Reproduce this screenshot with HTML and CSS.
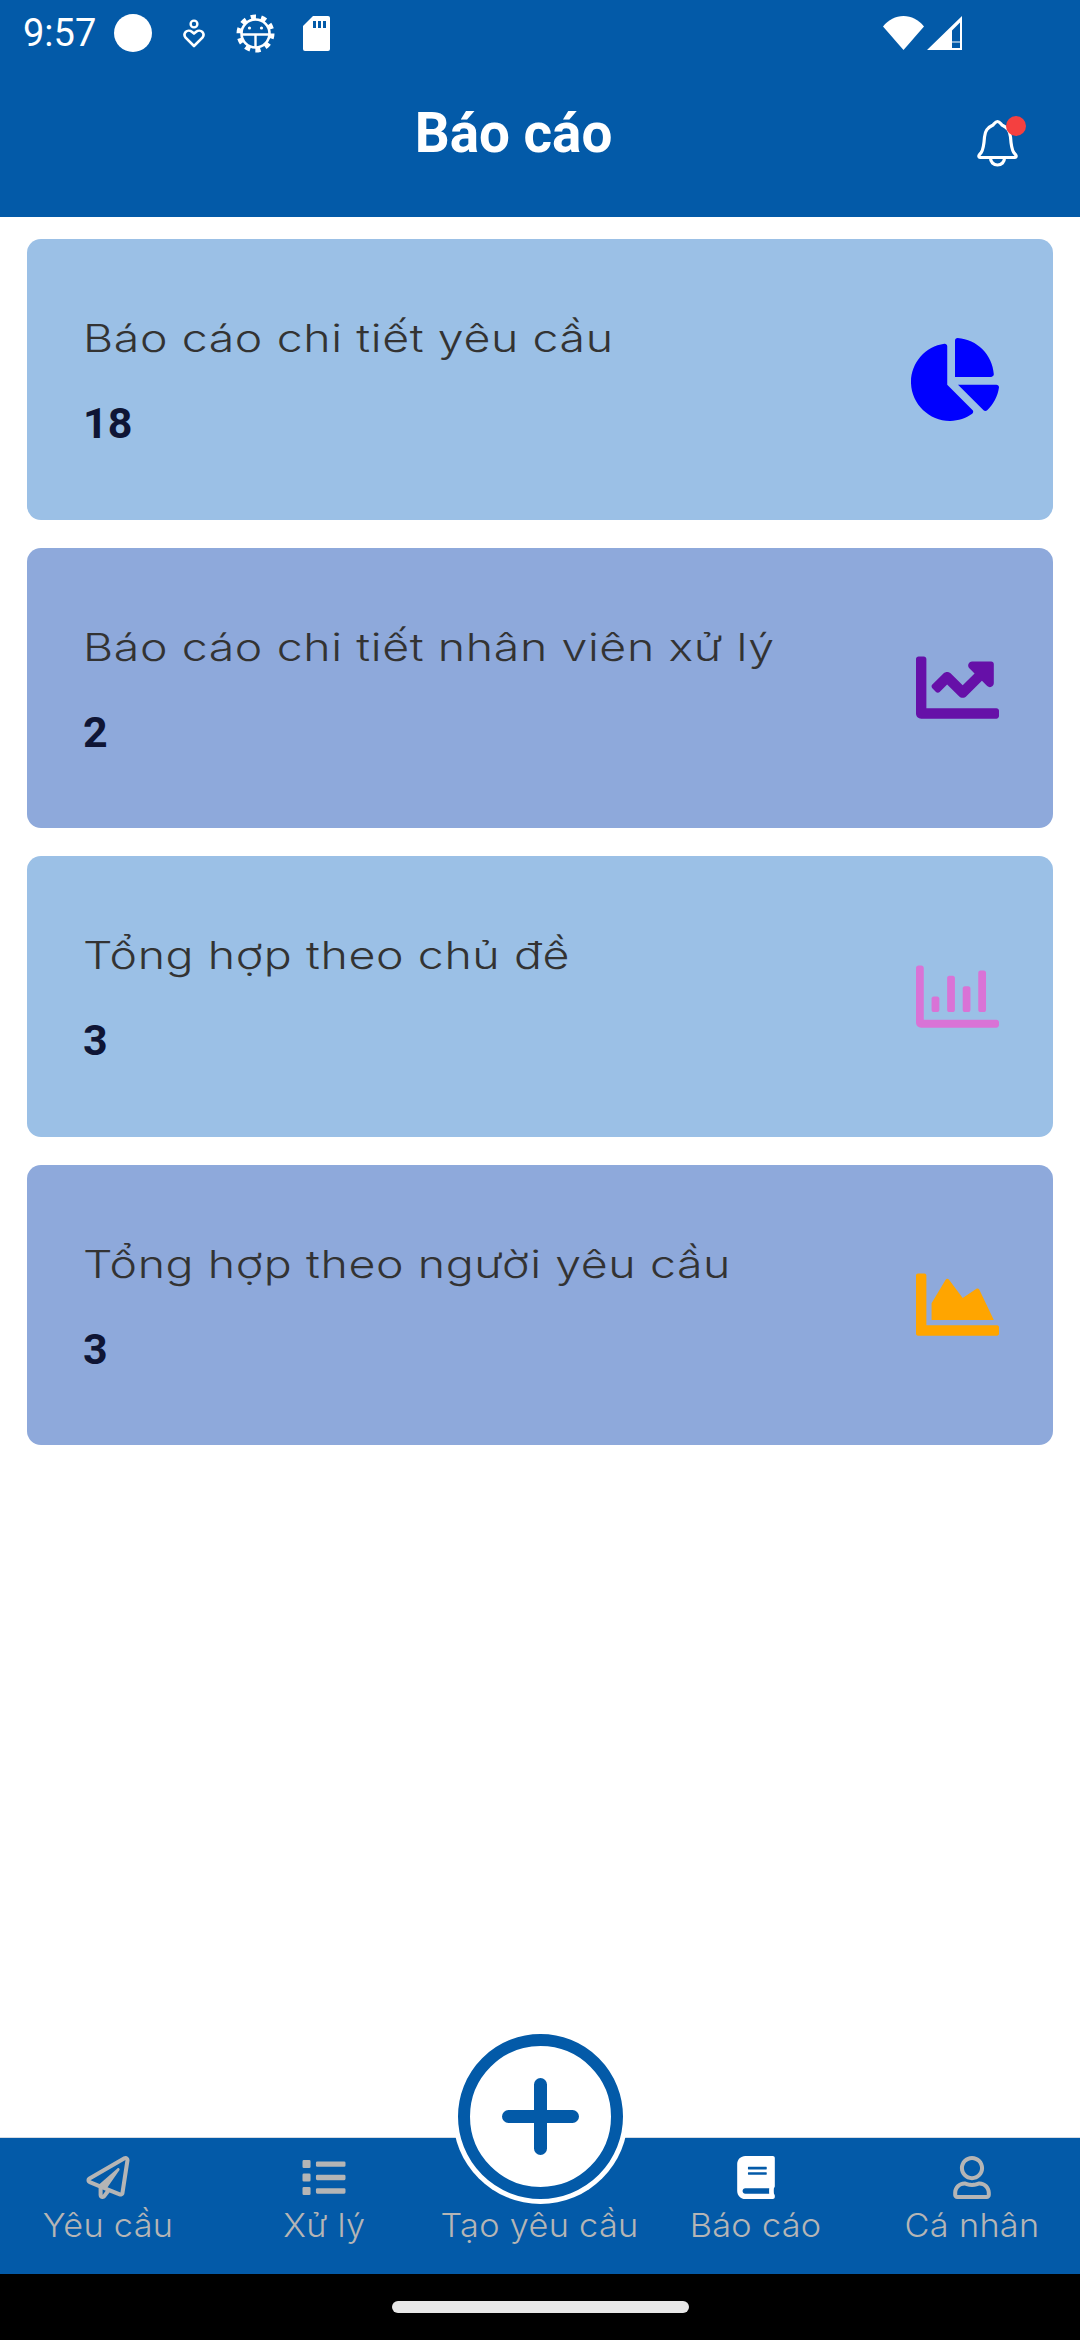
FILE: index.html
```html
<!DOCTYPE html>
<html lang="vi">
<head>
<meta charset="utf-8">
<title>Báo cáo</title>
<link rel="stylesheet" href="styles.css">
</head>
<body>
<div class="screen">
  <header class="header">
    <div class="status">
      <span class="time">9:57</span>
      <span class="dot-icon"></span>
      <svg class="st-heart" viewBox="0 0 22 29"><circle cx="11" cy="5" r="3.4" fill="none" stroke="#fff" stroke-width="2.4"/><path d="M11 27 2.6 18.6a4.4 4.4 0 0 1 0-5.6 4.6 4.6 0 0 1 6.2-.2L11 14.6l2.2-1.8a4.6 4.6 0 0 1 6.2.2 4.4 4.4 0 0 1 0 5.6z" fill="none" stroke="#fff" stroke-width="2.6" stroke-linejoin="round"/></svg>
      <svg class="st-gear" viewBox="0 0 39 39"><circle cx="19.5" cy="19.5" r="16.5" fill="none" stroke="#fff" stroke-width="5" stroke-dasharray="5.2 5.16"/><circle cx="19.5" cy="19.5" r="14" fill="none" stroke="#fff" stroke-width="2.6"/><path d="M5.5 20.5h28M19.5 20.5v13" stroke="#fff" stroke-width="2.4" fill="none"/><circle cx="13.5" cy="14" r="1.6" fill="#fff"/><circle cx="25.5" cy="14" r="1.6" fill="#fff"/></svg>
      <svg class="st-sd" viewBox="0 0 27 35"><path d="M10 0h15a2 2 0 0 1 2 2v31a2 2 0 0 1-2 2H2a2 2 0 0 1-2-2V10z" fill="#fff"/><path d="M10 5h3v7h-3zM15 5h3v7h-3zM20 5h3v7h-3z" fill="#035aa8"/></svg>
      <span class="status-gap"></span>
      <svg class="st-wifi" viewBox="0 0 41 34"><path d="M0 10.500C5.500 3.800 12.600 0 20.500 0S35.500 3.800 41 10.500L20.500 34z" fill="#fff"/></svg>
      <svg class="st-signal" viewBox="0 0 35 34"><path d="M35 0v34H0zM33 6.500 25 14.500V32h8z" fill="#fff" fill-rule="evenodd"/><path d="M25 25h8v2h-8z" fill="#fff" opacity=".5"/></svg>
    </div>
    <div class="appbar">
      <h1 class="title">Báo cáo</h1>
      <div class="bell">
        <svg class="bell-svg" viewBox="0 0 41 48"><path d="M20.500 2.500c2 0 3 2 4.500 3.500 5.500 2.500 8 5.500 8.500 12 .4 6 .8 12 3.300 15.500l2 2.500c.8 1.300.2 2.500-1.300 2.500H3.500c-1.500 0-2.100-1.200-1.300-2.500l2-2.500C6.700 30 7.100 24 7.500 18c.5-6.500 3-9.500 8.500-12 1.500-1.500 2.500-3.500 4.500-3.500zM13.500 39c0 4 3 7 7 7s7-3 7-7" fill="none" stroke="#fff" stroke-width="3.200" stroke-linejoin="round"/></svg>
        <span class="bell-dot"></span>
      </div>
    </div>
  </header>

  <main class="list">
    <section class="card card-light">
      <div class="card-text"><p class="card-title">Báo cáo chi tiết yêu cầu</p><p class="card-num">18</p></div>
      <svg class="ic-pie" viewBox="0 0 544 512"><path fill="#0000ff" d="M527.79 288H290.500l158.030 158.030c6.040 6.040 15.980 6.530 22.190.68 38.700-36.460 65.320-85.610 73.130-140.860 1.340-9.460-6.510-17.850-16.060-17.850zm-15.830-64.800C503.720 103.740 408.260 8.280 288.800.04 279.680-.59 272 7.100 272 16.240V240h223.770c9.140 0 16.820-7.680 16.190-16.800zM224 288V50.710c0-9.550-8.390-17.400-17.840-16.060C86.990 51.490-4.100 155.600.14 280.370 4.500 408.510 114.830 513.590 243.030 511.980c50.400-.63 96.970-16.870 135.260-44.030 7.900-5.600 8.420-17.230 1.570-24.080L224 288z"/></svg>
    </section>
    <section class="card card-dark">
      <div class="card-text"><p class="card-title">Báo cáo chi tiết nhân viên xử lý</p><p class="card-num">2</p></div>
      <svg class="ic-chart" viewBox="0 0 512 512"><path fill="#6610a8" d="M496 384H64V80c0-8.840-7.160-16-16-16H16C7.160 64 0 71.160 0 80v336c0 17.670 14.330 32 32 32h464c8.840 0 16-7.160 16-16v-32c0-8.840-7.160-16-16-16zM464 96H345.940c-21.380 0-32.090 25.850-16.970 40.970l32.400 32.400L288 242.750l-73.370-73.370c-12.500-12.500-32.760-12.500-45.250 0l-68.690 68.690c-6.250 6.250-6.250 16.380 0 22.630l22.620 22.620c6.250 6.250 16.380 6.250 22.630 0L192 237.250l73.370 73.370c12.500 12.500 32.760 12.500 45.250 0l96-96 32.400 32.400c15.120 15.120 40.970 4.410 40.970-16.970V112c0-8.840-7.160-16-16-16z"/></svg>
    </section>
    <section class="card card-light">
      <div class="card-text"><p class="card-title">Tổng hợp theo chủ đề</p><p class="card-num">3</p></div>
      <svg class="ic-chart" viewBox="0 0 512 512"><path fill="#d973d6" d="M396.800 352h22.400c6.400 0 12.800-6.400 12.800-12.800V108.800c0-6.400-6.400-12.800-12.800-12.800h-22.400c-6.400 0-12.800 6.400-12.800 12.800v230.400c0 6.400 6.400 12.800 12.800 12.800zm-192 0h22.400c6.400 0 12.800-6.400 12.800-12.800V140.800c0-6.400-6.400-12.800-12.800-12.800h-22.400c-6.400 0-12.800 6.400-12.800 12.800v198.400c0 6.400 6.400 12.800 12.800 12.800zm96 0h22.400c6.400 0 12.800-6.400 12.800-12.800V204.800c0-6.400-6.400-12.800-12.800-12.800h-22.400c-6.400 0-12.800 6.400-12.800 12.800v134.400c0 6.400 6.400 12.800 12.800 12.800zM496 400H48V80c0-8.840-7.160-16-16-16H16C7.160 64 0 71.160 0 80v336c0 17.670 14.330 32 32 32h464c8.840 0 16-7.160 16-16v-16c0-8.840-7.160-16-16-16zm-387.200-48h22.400c6.400 0 12.800-6.400 12.800-12.800v-70.400c0-6.400-6.400-12.800-12.800-12.800h-22.400c-6.400 0-12.800 6.400-12.800 12.800v70.400c0 6.400 6.400 12.800 12.800 12.800z"/></svg>
    </section>
    <section class="card card-dark">
      <div class="card-text"><p class="card-title">Tổng hợp theo người yêu cầu</p><p class="card-num">3</p></div>
      <svg class="ic-chart" viewBox="0 0 512 512"><path fill="#ffa500" d="M500 384c6.600 0 12 5.400 12 12v40c0 6.600-5.400 12-12 12H12c-6.600 0-12-5.400-12-12V76c0-6.600 5.400-12 12-12h40c6.600 0 12 5.400 12 12v308h436zM372.700 159.500L288 216l-85.300-113.700c-5.100-6.800-15.500-6.300-19.900 1L96 248v104h384l-89.900-187.800c-3.200-6.500-11.400-8.700-17.400-4.700z"/></svg>
    </section>
  </main>

  <nav class="tabs">
    <div class="tab">
      <svg class="tab-icon" viewBox="0 0 512 512"><path d="M440 6.500L24 246.400c-34.400 19.900-31.100 70.800 5.700 85.900L144 379.600V464c0 46.400 59.200 65.500 86.600 28.600l43.800-59.100 111.900 46.200c5.900 2.400 12.100 3.600 18.300 3.600 8.200 0 16.300-2.100 23.600-6.200 12.800-7.200 21.600-20 23.900-34.500l59.400-387.200c6.100-40.100-36.900-68.800-71.500-48.900zM192 464v-64.600l36.600 15.100L192 464zm212.600-28.700l-153.800-63.500L391 169.500c10.700-15.500-9.500-33.500-23.700-21.200L155.800 332.600 48 288 464 48l-59.400 387.300z"/></svg>
      <span class="tab-label">Yêu cầu</span>
    </div>
    <div class="tab">
      <svg class="tab-icon" viewBox="0 0 512 512"><path d="M80 368H16a16 16 0 0 0-16 16v64a16 16 0 0 0 16 16h64a16 16 0 0 0 16-16v-64a16 16 0 0 0-16-16zm0-320H16A16 16 0 0 0 0 64v64a16 16 0 0 0 16 16h64a16 16 0 0 0 16-16V64a16 16 0 0 0-16-16zm0 160H16a16 16 0 0 0-16 16v64a16 16 0 0 0 16 16h64a16 16 0 0 0 16-16v-64a16 16 0 0 0-16-16zm416 176H176a16 16 0 0 0-16 16v32a16 16 0 0 0 16 16h320a16 16 0 0 0 16-16v-32a16 16 0 0 0-16-16zm0-320H176a16 16 0 0 0-16 16v32a16 16 0 0 0 16 16h320a16 16 0 0 0 16-16V80a16 16 0 0 0-16-16zm0 160H176a16 16 0 0 0-16 16v32a16 16 0 0 0 16 16h320a16 16 0 0 0 16-16v-32a16 16 0 0 0-16-16z"/></svg>
      <span class="tab-label">Xử lý</span>
    </div>
    <div class="tab">
      <span class="tab-icon tab-spacer"></span>
      <span class="tab-label">Tạo yêu cầu</span>
      <div class="fab">
        <svg class="fab-plus" viewBox="0 0 77 77"><path d="M38.500 6.500v64M6.500 38.500h64" stroke="#035aa8" stroke-width="13" stroke-linecap="round" fill="none"/></svg>
      </div>
    </div>
    <div class="tab">
      <svg class="tab-icon tab-active" viewBox="0 0 448 512"><path d="M448 360V24c0-13.300-10.700-24-24-24H96C43 0 0 43 0 96v320c0 53 43 96 96 96h328c13.300 0 24-10.700 24-24v-16c0-7.500-3.500-14.300-8.900-18.700-4.200-15.400-4.200-59.300 0-74.700 5.400-4.300 8.900-11.100 8.900-18.600zM128 134c0-3.300 2.700-6 6-6h212c3.300 0 6 2.700 6 6v20c0 3.300-2.700 6-6 6H134c-3.300 0-6-2.700-6-6v-20zm0 64c0-3.300 2.700-6 6-6h212c3.300 0 6 2.700 6 6v20c0 3.300-2.700 6-6 6H134c-3.300 0-6-2.700-6-6v-20zm253.400 250H96c-17.700 0-32-14.300-32-32 0-17.600 14.400-32 32-32h285.400c-1.900 17.100-1.900 46.900 0 64z"/></svg>
      <span class="tab-label">Báo cáo</span>
    </div>
    <div class="tab">
      <svg class="tab-icon" viewBox="0 0 448 512"><path d="M313.600 304c-28.700 0-42.500 16-89.600 16-47.100 0-60.800-16-89.600-16C60.200 304 0 364.200 0 438.400V464c0 26.500 21.500 48 48 48h352c26.500 0 48-21.500 48-48v-25.600c0-74.200-60.200-134.400-134.400-134.400zM400 464H48v-25.600c0-47.600 38.800-86.400 86.400-86.400 14.600 0 38.300 16 89.600 16 51.700 0 74.900-16 89.600-16 47.600 0 86.400 38.800 86.400 86.400V464zM224 288c79.500 0 144-64.500 144-144S303.500 0 224 0 80 64.500 80 144s64.500 144 144 144zm0-240c52.900 0 96 43.100 96 96s-43.100 96-96 96-96-43.100-96-96 43.100-96 96-96z"/></svg>
      <span class="tab-label">Cá nhân</span>
    </div>
  </nav>
  <div class="gesture"><span class="pill"></span></div>
</div>
</body>
</html>
```

FILE: styles.css
```css
* { box-sizing: border-box; }
html, body { margin: 0; padding: 0; background: #fff; }
.screen {
  width: 1080px;
  height: 2340px;
  display: flex;
  flex-direction: column;
  overflow: hidden;
  font-family: Inter, "Noto Sans", sans-serif;
}

/* Header */
.header { height: 217px; background: #035aa8; flex: none; }
.status {
  height: 66px;
  display: flex;
  align-items: center;
  padding: 0 118px 0 23px;
  color: #fff;
}
.time { font: 400 38px/1 Roboto, sans-serif; width: 91px; }
.dot-icon { width: 38px; height: 38px; border-radius: 50%; background: #fff; }
.st-heart { width: 22px; height: 29px; margin-left: 31px; }
.st-gear { width: 39px; height: 39px; margin-left: 31px; }
.st-sd { width: 27px; height: 35px; margin-left: 28px; }
.status-gap { flex: 1; }
.st-wifi { width: 41px; height: 34px; }
.st-signal { width: 35px; height: 34px; margin-left: 3px; }

.appbar {
  height: 151px;
  display: flex;
  align-items: center;
  padding: 0 62px 16px 0;
}
.title {
  flex: 1;
  margin: 0;
  padding-left: 50px;
  text-align: center;
  font: 700 54.8px/1 Roboto, sans-serif;
  color: #fff;
}
.bell { position: relative; width: 41px; height: 48px; margin-top: 18px; }
.bell-svg { display: block; width: 41px; height: 48px; }
.bell-dot {
  position: absolute;
  top: -3px;
  right: -8px;
  width: 20px;
  height: 20px;
  border-radius: 50%;
  background: #f44040;
}

/* Cards */
.list {
  flex: 1;
  display: flex;
  flex-direction: column;
  gap: 28px;
  padding: 22px 27px 0;
}
.card {
  height: 280.5px;
  flex: none;
  border-radius: 14px;
  display: flex;
  align-items: center;
  justify-content: space-between;
  padding: 0 54px 0 56px;
}
.card-light { background: #9bc0e6; }
.card-dark { background: #8ea9db; }
.card-text { display: flex; flex-direction: column; gap: 41px; padding-top: 3px; }
.card-title {
  margin: 0;
  font-family: Inter, sans-serif;
  font-weight: 300;
  font-size: 38px;
  line-height: 44px;
  letter-spacing: .5px;
  color: #333;
  transform: scaleX(1.222);
  transform-origin: left center;
}
.card-num {
  margin: 0;
  font: 700 43px/44px Roboto, sans-serif;
  color: #0f1535;
}
.ic-pie { width: 88px; height: 83px; }
.ic-chart { width: 83px; height: 83px; }

/* Bottom nav */
.tabs {
  height: 137px;
  flex: none;
  background: #035aa8;
  border-top: 1px solid #d5dbe3;
  display: grid;
  grid-template-columns: repeat(5, 216px);
}
.tab {
  position: relative;
  display: flex;
  flex-direction: column;
  align-items: center;
  padding-top: 18px;
}
.tab-icon { width: 44px; height: 43px; fill: #b5b5b5; display: block; }
.tab-active { fill: #fff; }
.tab-spacer { visibility: hidden; }
.tab-label {
  margin-top: 7px;
  font-family: Inter, sans-serif;
  font-weight: 300;
  font-size: 32px;
  line-height: 40px;
  letter-spacing: .3px;
  color: #b5b5b5;
  white-space: nowrap;
  transform: scaleX(1.07);
}
.fab {
  position: absolute;
  left: 25.5px;
  top: -104px;
  width: 165px;
  height: 165px;
  border-radius: 50%;
  background: #fff;
  border: 12.5px solid #035aa8;
  box-shadow: 0 0 0 5px #fff;
  display: flex;
  align-items: center;
  justify-content: center;
}
.fab-plus { width: 77px; height: 77px; }

/* Gesture bar */
.gesture {
  height: 66px;
  flex: none;
  background: #000;
  display: flex;
  justify-content: center;
  padding-top: 27px;
}
.pill { width: 297px; height: 12px; border-radius: 6px; background: #e8e8e8; }
```
